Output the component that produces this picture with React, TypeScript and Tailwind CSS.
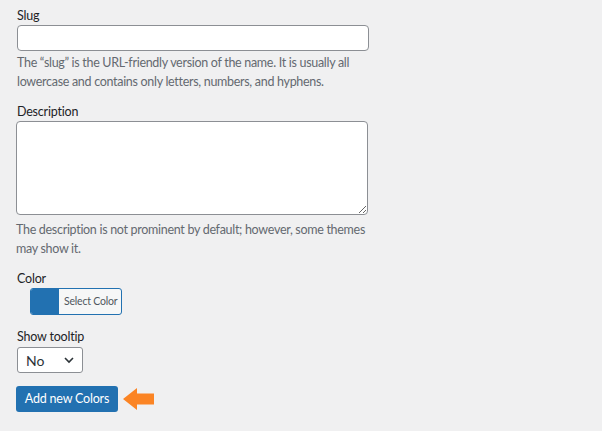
import React from "react";

const font = { fontFamily: 'Lato, "Noto Sans", sans-serif' };

function Label({ children }: { children: React.ReactNode }) {
  return (
    <label className="block h-[18px] text-[12.5px] leading-[18px] tracking-[-0.2px] text-[#1d2327]">{children}</label>
  );
}

function Help({ children }: { children: React.ReactNode }) {
  return <p className="text-[12.5px] leading-[18.5px] tracking-[-0.3px] text-[#646970]">{children}</p>;
}

export default function App() {
  return (
    <div className="min-h-[431px] w-[602px] bg-[#f0f0f1] pl-[17px] pt-[7px]" style={font}>
      <Label>Slug</Label>
      <input
        type="text"
        className="block h-[26px] w-[352px] rounded-[4px] border border-[#8c8f94] bg-white px-2 text-[14px] outline-none"
      />
      <div className="mt-[3px] w-[352px]">
        <Help>
          The “slug” is the URL-friendly version of the name. It is usually all lowercase and contains only letters,
          numbers, and hyphens.
        </Help>
      </div>

      <div className="mt-[12px] -ml-px">
        <div className="ml-px">
          <Label>Description</Label>
        </div>
        <textarea className="block h-[94px] w-[352px] resize rounded-[4px] border border-[#8c8f94] bg-white outline-none" />
      </div>
      <div className="mt-[6px] -ml-px w-[354px]">
        <Help>The description is not prominent by default; however, some themes may show it.</Help>
      </div>

      <div className="mt-[12px]">
        <Label>Color</Label>
        <button className="ml-[13px] flex h-[27px] w-[92px] overflow-hidden rounded-[3px] border border-[#2271b1] bg-[#f6f7f7]">
          <span className="h-full w-[27px] bg-[#2271b1]" />
          <span className="flex h-full flex-1 items-center whitespace-nowrap border-l border-[#2271b1] pl-[5px] text-[10.5px] tracking-[-0.2px] text-[#50575e]">
            Select Color
          </span>
        </button>
      </div>

      <div className="mt-[13px]">
        <Label>Show tooltip</Label>
        <div className="mt-px flex h-[26px] w-[66px] items-center justify-between rounded-[3px] border border-[#8c8f94] bg-white pl-[8px] pr-[7px] text-[14px] text-[#2c3338]">
          <span>No</span>
          <svg width="12" height="12" viewBox="0 0 12 12" fill="none">
            <path d="M2 4l4 4 4-4" stroke="#2c3338" strokeWidth="1.6" />
          </svg>
        </div>
      </div>

      <div className="mt-[13px] -ml-px flex items-center gap-[5px]">
        <button className="h-[26px] w-[102px] whitespace-nowrap rounded-[3px] bg-[#2271b1] text-[12.5px] tracking-[-0.2px] text-white">
          Add new Colors
        </button>
        <svg width="32" height="24" viewBox="0 0 32 24">
          <path d="M0 12 L14 1 L14 6.5 L31 6.5 L31 17.5 L14 17.5 L14 23 Z" fill="#fb8424" />
        </svg>
      </div>
    </div>
  );
}
